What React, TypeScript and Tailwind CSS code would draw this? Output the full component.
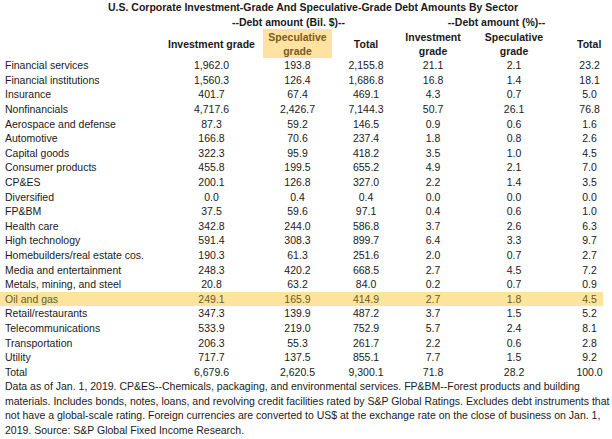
const rows: [string, string, string, string, string, string, string][] = [
  ["Financial services", "1,962.0", "193.8", "2,155.8", "21.1", "2.1", "23.2"],
  ["Financial institutions", "1,560.3", "126.4", "1,686.8", "16.8", "1.4", "18.1"],
  ["Insurance", "401.7", "67.4", "469.1", "4.3", "0.7", "5.0"],
  ["Nonfinancials", "4,717.6", "2,426.7", "7,144.3", "50.7", "26.1", "76.8"],
  ["Aerospace and defense", "87.3", "59.2", "146.5", "0.9", "0.6", "1.6"],
  ["Automotive", "166.8", "70.6", "237.4", "1.8", "0.8", "2.6"],
  ["Capital goods", "322.3", "95.9", "418.2", "3.5", "1.0", "4.5"],
  ["Consumer products", "455.8", "199.5", "655.2", "4.9", "2.1", "7.0"],
  ["CP&ES", "200.1", "126.8", "327.0", "2.2", "1.4", "3.5"],
  ["Diversified", "0.0", "0.4", "0.4", "0.0", "0.0", "0.0"],
  ["FP&BM", "37.5", "59.6", "97.1", "0.4", "0.6", "1.0"],
  ["Health care", "342.8", "244.0", "586.8", "3.7", "2.6", "6.3"],
  ["High technology", "591.4", "308.3", "899.7", "6.4", "3.3", "9.7"],
  ["Homebuilders/real estate cos.", "190.3", "61.3", "251.6", "2.0", "0.7", "2.7"],
  ["Media and entertainment", "248.3", "420.2", "668.5", "2.7", "4.5", "7.2"],
  ["Metals, mining, and steel", "20.8", "63.2", "84.0", "0.2", "0.7", "0.9"],
  ["Oil and gas", "249.1", "165.9", "414.9", "2.7", "1.8", "4.5"],
  ["Retail/restaurants", "347.3", "139.9", "487.2", "3.7", "1.5", "5.2"],
  ["Telecommunications", "533.9", "219.0", "752.9", "5.7", "2.4", "8.1"],
  ["Transportation", "206.3", "55.3", "261.7", "2.2", "0.6", "2.8"],
  ["Utility", "717.7", "137.5", "855.1", "7.7", "1.5", "9.2"],
  ["Total", "6,679.6", "2,620.5", "9,300.1", "71.8", "28.2", "100.0"],
];

const App = () => {
  return (
    <div className="w-[612px] h-[439px] overflow-hidden bg-white text-[#1a1a1a] text-[10.5px] font-['Liberation_Sans',Arial,sans-serif]">
      {/* Title */}
      <div className="w-[626px] text-center font-bold leading-[15px]">
        U.S. Corporate Investment-Grade And Speculative-Grade Debt Amounts By Sector
      </div>

      <table className="table-fixed border-collapse w-[603px]">
        <colgroup>
          <col className="w-[165px]" />
          <col className="w-[93px]" />
          <col className="w-[5px]" />
          <col className="w-[69px]" />
          <col className="w-[68px]" />
          <col className="w-[66px]" />
          <col className="w-[96px]" />
          <col className="w-[41px]" />
        </colgroup>
        <thead className="font-bold">
          <tr className="leading-[14px]">
            <th />
            <th colSpan={4} className="text-center font-bold pl-[12px]">--Debt amount (Bil. $)--</th>
            <th colSpan={3} className="text-center font-bold pr-[10px]">--Debt amount (%)--</th>
          </tr>
          <tr className="leading-[14px] h-[29px]">
            <th />
            <th className="text-center align-middle">Investment grade</th>
            <th />
            <th className="text-center align-middle bg-[#fde2a2] text-[#7a5a1f]">
              Speculative
              <br />
              grade
            </th>
            <th className="text-center align-middle">Total</th>
            <th className="text-center align-middle">
              Investment
              <br />
              grade
            </th>
            <th className="text-center align-middle">
              Speculative
              <br />
              grade
            </th>
            <th className="text-left align-middle pl-[15px] whitespace-nowrap">Total</th>
          </tr>
        </thead>
        <tbody>
          {rows.map((r) => {
            const hl = r[0] === "Oil and gas";
            return (
              <tr
                key={r[0]}
                className={hl ? "h-[14.6px] leading-[14px] bg-[#fde49c] text-[#6e5a1e]" : "h-[14.6px] leading-[14px]"}
              >
                <td className="pl-[5px] whitespace-nowrap">{r[0]}</td>
                <td className="text-center">{r[1]}</td>
                <td />
                <td className="text-center">{r[2]}</td>
                <td className="text-center">{r[3]}</td>
                <td className="text-center">{r[4]}</td>
                <td className="text-center">{r[5]}</td>
                <td className="text-center pl-[14px] whitespace-nowrap">{r[6]}</td>
              </tr>
            );
          })}
        </tbody>
      </table>

      {/* Notes */}
      <div className="pl-[5px] leading-[14.5px] whitespace-nowrap">
        <div>
          Data as of Jan. 1, 2019. CP&ES--Chemicals, packaging, and environmental services. FP&BM--Forest products and building
        </div>
        <div>
          materials. Includes bonds, notes, loans, and revolving credit facilities rated by S&P Global Ratings. Excludes debt instruments that do
        </div>
        <div>
          not have a global-scale rating. Foreign currencies are converted to US$ at the exchange rate on the close of business on Jan. 1,
        </div>
        <div>2019. Source: S&P Global Fixed Income Research.</div>
      </div>
    </div>
  );
};

export default App;
